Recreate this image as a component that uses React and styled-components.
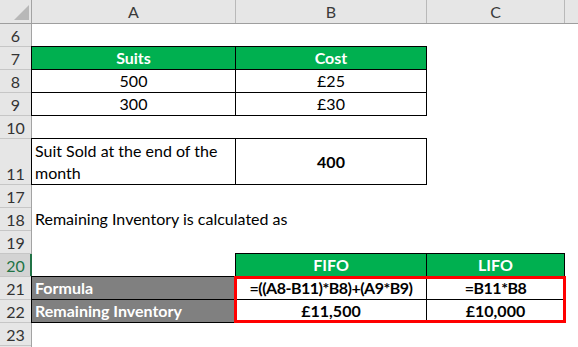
import React from "react";
import styled, { createGlobalStyle, css } from "styled-components";

const GlobalStyle = createGlobalStyle`
  html, body {
    margin: 0;
    padding: 0;
    background: #ffffff;
  }
  body {
    font-family: Lato, "Open Sans", sans-serif;
    overflow: hidden;
  }
`;

const COLUMNS = "31px 203px 190px 137px 1fr";

const Sheet = styled.div`
  position: relative;
  display: flex;
  flex-direction: column;
  row-gap: 1px;
  width: 578px;
  height: 347px;
  overflow: hidden;
  background: #ffffff;
`;

const Row = styled.div`
  display: grid;
  grid-template-columns: ${COLUMNS};
  column-gap: 1px;
  height: ${(p) => p.$h || 22}px;
  flex: none;
`;

const HeaderRow = styled(Row)`
  height: 23px;
`;

const Corner = styled.div`
  display: flex;
  align-items: flex-end;
  justify-content: flex-end;
  padding: 0 2px 3px 0;
  background: #e6e6e6;
  box-shadow: 1px 0 0 #a3a3a3, 0 1px 0 #9e9e9e, 1px 1px 0 #9e9e9e;
`;

const ColHead = styled.div`
  display: flex;
  align-items: center;
  justify-content: center;
  background: #e6e6e6;
  color: #3a3a3a;
  font-size: 16px;
  box-shadow: 1px 0 0 #b9b9b9, 0 1px 0 #9e9e9e, 1px 1px 0 #9e9e9e;
`;

const RowNum = styled.div`
  display: flex;
  align-items: flex-end;
  justify-content: center;
  line-height: 21px;
  font-size: 16px;
  background: #e6e6e6;
  color: #333333;
  box-shadow: 1px 0 0 #a3a3a3, 0 1px 0 #c6c6c6, 1px 1px 0 #a3a3a3;
  ${(p) =>
    p.$active &&
    css`
      background: #d3d3d3;
      color: #217346;
      box-shadow: inset -1px 0 0 #217346, 1px 0 0 #217346, 0 1px 0 #c6c6c6,
        1px 1px 0 #a3a3a3;
    `}
`;

const Cell = styled.div`
  display: flex;
  align-items: center;
  justify-content: ${(p) => (p.$center ? "center" : "flex-start")};
  padding: 0 3px;
  font-size: 16px;
  line-height: 22px;
  letter-spacing: ${(p) => (p.$tight ? "-0.5px" : "normal")};
  white-space: ${(p) => (p.$wrap ? "normal" : "nowrap")};
  min-width: 0;
  color: ${(p) => p.$ink || "#000000"};
  background: ${(p) => p.$fill || "transparent"};
  font-weight: ${(p) => (p.$bold ? 700 : 400)};
  box-shadow: ${(p) => (p.$boxed ? "0 0 0 1px #000000" : "none")};
`;

const Selection = styled.div`
  position: absolute;
  left: 234px;
  top: 276px;
  width: 332px;
  height: 47px;
  box-sizing: border-box;
  border: 3px solid #ff0000;
  pointer-events: none;
`;

const GREEN = "#00b050";
const GREY = "#808080";

const CornerMark = () => (
  <svg width="15" height="15" viewBox="0 0 15 15">
    <polygon points="0,15 15,0 15,15" fill="#b8b8b8" />
  </svg>
);

const Empty = () => (
  <>
    <Cell />
    <Cell />
    <Cell />
    <Cell />
  </>
);

export default function App() {
  return (
    <>
      <GlobalStyle />
      <Sheet>
        <HeaderRow>
          <Corner>
            <CornerMark />
          </Corner>
          <ColHead>A</ColHead>
          <ColHead>B</ColHead>
          <ColHead>C</ColHead>
          <ColHead />
        </HeaderRow>

        <Row>
          <RowNum>6</RowNum>
          <Empty />
        </Row>

        <Row>
          <RowNum>7</RowNum>
          <Cell $boxed $center $bold $fill={GREEN} $ink="#ffffff">
            Suits
          </Cell>
          <Cell $boxed $center $bold $fill={GREEN} $ink="#ffffff">
            Cost
          </Cell>
          <Cell />
          <Cell />
        </Row>

        <Row>
          <RowNum>8</RowNum>
          <Cell $boxed $center>500</Cell>
          <Cell $boxed $center>£25</Cell>
          <Cell />
          <Cell />
        </Row>

        <Row>
          <RowNum>9</RowNum>
          <Cell $boxed $center>300</Cell>
          <Cell $boxed $center>£30</Cell>
          <Cell />
          <Cell />
        </Row>

        <Row>
          <RowNum>10</RowNum>
          <Empty />
        </Row>

        <Row $h={45}>
          <RowNum>11</RowNum>
          <Cell $boxed $wrap>
            Suit Sold at the end of the month
          </Cell>
          <Cell $boxed $center $bold>
            400
          </Cell>
          <Cell />
          <Cell />
        </Row>

        <Row>
          <RowNum>17</RowNum>
          <Empty />
        </Row>

        <Row>
          <RowNum>18</RowNum>
          <Cell>Remaining Inventory is calculated as</Cell>
          <Cell />
          <Cell />
          <Cell />
        </Row>

        <Row>
          <RowNum>19</RowNum>
          <Empty />
        </Row>

        <Row>
          <RowNum $active>20</RowNum>
          <Cell />
          <Cell $boxed $center $bold $fill={GREEN} $ink="#ffffff">
            FIFO
          </Cell>
          <Cell $boxed $center $bold $fill={GREEN} $ink="#ffffff">
            LIFO
          </Cell>
          <Cell />
        </Row>

        <Row>
          <RowNum>21</RowNum>
          <Cell $boxed $bold $fill={GREY} $ink="#ffffff">
            Formula
          </Cell>
          <Cell $boxed $center $bold $tight>
            =((A8-B11)*B8)+(A9*B9)
          </Cell>
          <Cell $boxed $center $bold $tight>
            =B11*B8
          </Cell>
          <Cell />
        </Row>

        <Row>
          <RowNum>22</RowNum>
          <Cell $boxed $bold $fill={GREY} $ink="#ffffff">
            Remaining Inventory
          </Cell>
          <Cell $boxed $center $bold>
            £11,500
          </Cell>
          <Cell $boxed $center $bold>
            £10,000
          </Cell>
          <Cell />
        </Row>

        <Row>
          <RowNum>23</RowNum>
          <Empty />
        </Row>

        <Row>
          <RowNum />
          <Empty />
        </Row>

        <Selection />
      </Sheet>
    </>
  );
}
